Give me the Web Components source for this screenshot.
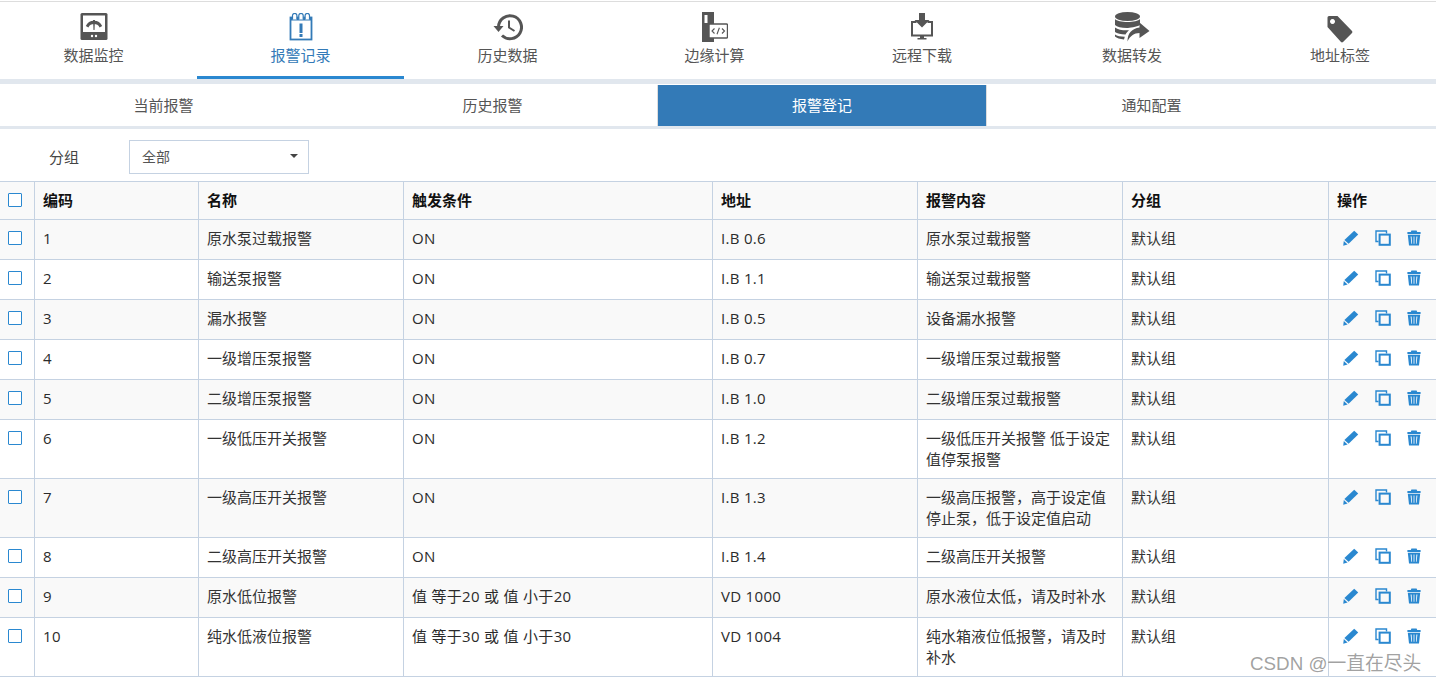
<!DOCTYPE html>
<html lang="zh">
<head>
<meta charset="utf-8">
<title>报警登记</title>
<style>
    html, body { margin: 0; padding: 0; background: #fff; }
    body {
        font-family: "Open Sans", "Noto Sans CJK SC", sans-serif;
        font-size: 15px;
        color: #333;
        height: 684px;
        overflow: hidden;
        position: relative;
    }
</style>
</head>
<body>
<top-nav>
    <nav-item label="数据监控" icon="gauge"></nav-item>
    <nav-item label="报警记录" icon="alarm" active></nav-item>
    <nav-item label="历史数据" icon="history"></nav-item>
    <nav-item label="边缘计算" icon="edge"></nav-item>
    <nav-item label="远程下载" icon="download"></nav-item>
    <nav-item label="数据转发" icon="forward"></nav-item>
    <nav-item label="地址标签" icon="tag"></nav-item>
</top-nav>
<sub-tabs>
    <sub-tab>当前报警</sub-tab>
    <sub-tab>历史报警</sub-tab>
    <sub-tab active>报警登记</sub-tab>
    <sub-tab>通知配置</sub-tab>
</sub-tabs>
<group-filter label="分组" value="全部"></group-filter>
<alarm-table></alarm-table>
<water-mark>CSDN @一直在尽头</water-mark>

<script>
const NAV_ICONS = {
    gauge: `<svg width="28" height="28" viewBox="0 0 28 28">
        <rect x="0.5" y="0" width="27" height="27" rx="1.5" fill="currentColor"/>
        <rect x="3" y="2.5" width="22" height="16.5" fill="#fff"/>
        <path d="M5.8 13 A9 9 0 0 1 22.2 13 L19.6 14.4 A6.4 6.4 0 0 0 8.4 14.4 Z" fill="currentColor"/>
        <path d="M13 7 L15 7 L14.5 17 L13.5 17 Z" fill="currentColor"/>
        <circle cx="12" cy="23" r="1.2" fill="#fff"/><circle cx="16" cy="23" r="1.2" fill="#fff"/>
    </svg>`,
    alarm: `<svg width="24" height="28" viewBox="0 0 24 28">
        <rect x="1.5" y="4.5" width="21" height="22" fill="none" stroke="currentColor" stroke-width="1.8"/>
        <rect x="1" y="4" width="22" height="3.5" fill="currentColor"/>
        <path d="M3.5 6.5 V2.6 a2 2 0 0 1 4.4 0 V6.5 M9.8 6.5 V2.6 a2 2 0 0 1 4.4 0 V6.5 M16.1 6.5 V2.6 a2 2 0 0 1 4.4 0 V6.5" fill="#fff" stroke="currentColor" stroke-width="1.2"/>
        <rect x="10.5" y="10.5" width="3" height="9.5" fill="currentColor"/>
        <rect x="10.5" y="21" width="3" height="3" fill="currentColor"/>
    </svg>`,
    history: `<svg width="30" height="28" viewBox="0 0 30 28">
        <path d="M5.5 14 A11.5 11.5 0 1 1 9 22.5" fill="none" stroke="currentColor" stroke-width="3"/>
        <path d="M0.5 13 L10.5 13 L5.5 19 Z" fill="currentColor"/>
        <path d="M16 7.5 V14.5 L21.5 18" fill="none" stroke="currentColor" stroke-width="2"/>
    </svg>`,
    edge: `<svg width="26" height="30" viewBox="0 0 26 30">
        <path d="M0 0 H12 V12 H7 V25 H12 V30 H0 Z" fill="currentColor"/>
        <rect x="2.5" y="3" width="3" height="8" fill="#fff"/>
        <rect x="7" y="12" width="18.5" height="14" rx="1" fill="#fff" stroke="currentColor" stroke-width="1.4"/>
        <path d="M12.5 16.5 L10 19 L12.5 21.5 M20 16.5 L22.5 19 L20 21.5 M17.4 15.8 L15 22.2" fill="none" stroke="currentColor" stroke-width="1.1"/>
    </svg>`,
    download: `<svg width="22" height="28" viewBox="0 0 22 28">
        <path d="M8 0 H14 V7 H18.5 L11 14.5 L3.5 7 H8 Z" fill="currentColor"/>
        <path d="M5.5 9 H1 V22.5 H21 V9 H16.5" fill="none" stroke="currentColor" stroke-width="2"/>
        <path d="M9 23 H13 V25 H15.5 V26.5 H6.5 V25 H9 Z" fill="currentColor"/>
    </svg>`,
    forward: `<svg width="35" height="30" viewBox="0 0 35 30">
        <ellipse cx="12.5" cy="4.5" rx="12.5" ry="4.5" fill="currentColor"/>
        <path d="M0 7 C3 11 22 11 25 7 V13 C22 15 14 16 12 16 C6 16 2 15 0 13 Z" fill="currentColor"/>
        <path d="M0 15.5 C3 18 9 18.5 14 18.2 C12.5 19.5 11.5 20.5 10.5 22.5 C6 22.3 2 21.5 0 20 Z" fill="currentColor"/>
        <path d="M0 22.5 C2 24 5.5 24.7 9.8 24.8 L9 27.5 C5 27 1.5 26 0 24.5 Z" fill="currentColor"/>
        <path d="M12.5 29.5 C12.5 21 17 16.5 24.5 15.5 V10.5 L34.5 19 L24.5 26 V21 C19 21 15 24 12.5 29.5 Z" fill="currentColor"/>
    </svg>`,
    tag: `<svg width="26" height="27" viewBox="0 0 26 27" style="margin-top:4px">
        <path fill-rule="evenodd" d="M2 0 H10.5 L25 15 a1.5 1.5 0 0 1 0 2 L16 26 a1.5 1.5 0 0 1 -2 0 L0.5 11 V1.5 A1.5 1.5 0 0 1 2 0 Z M5.5 3 a2.5 2.5 0 1 0 0.01 0 Z" fill="currentColor"/>
    </svg>`
};

class NavItem extends HTMLElement {
    constructor() {
        super();
        this.attachShadow({ mode: 'open' });
        const icon = this.getAttribute('icon');
        this.shadowRoot.innerHTML = `
            <style>
                :host {
                    display: flex;
                    flex-direction: column;
                    align-items: center;
                    box-sizing: border-box;
                    height: 77px;
                    padding-top: 9px;
                    color: #555;
                    border-bottom: 3px solid transparent;
                }
                :host([active]) {
                    color: #337ab7;
                    border-bottom-color: #2a88d0;
                }
                .icon {
                    height: 32px;
                    display: flex;
                    align-items: center;
                    justify-content: center;
                }
                svg { display: block; }
                .label { line-height: 21px; margin-top: 2px; }
            </style>
            <div class="icon">${NAV_ICONS[icon] || ''}</div>
            <div class="label">${this.getAttribute('label')}</div>
        `;
    }
}

class TopNav extends HTMLElement {
    constructor() {
        super();
        this.attachShadow({ mode: 'open' });
        this.shadowRoot.innerHTML = `
            <style>
                :host {
                    display: block;
                    margin-top: 1px;
                    border-top: 1px solid #ddd;
                    border-bottom: 5px solid #e1e7ee;
                    overflow: hidden;
                }
                .row {
                    display: grid;
                    grid-template-columns: 207px 207px 207px 207px 208px 212px 204px;
                    margin-left: -10px;
                }
            </style>
            <div class="row"><slot></slot></div>
        `;
    }
}

class SubTab extends HTMLElement {
    constructor() {
        super();
        this.attachShadow({ mode: 'open' });
        this.shadowRoot.innerHTML = `
            <style>
                :host {
                    display: block;
                    height: 41px;
                    margin-top: 1px;
                    line-height: 40px;
                    text-align: center;
                    color: #555;
                }
                :host([active]) {
                    background: #337ab7;
                    color: #fff;
                    margin-right: 1px;
                    box-shadow: -1px 0 0 #ddd, 1px 0 0 #ddd;
                }
            </style>
            <slot></slot>
        `;
    }
}

class SubTabs extends HTMLElement {
    constructor() {
        super();
        this.attachShadow({ mode: 'open' });
        this.shadowRoot.innerHTML = `
            <style>
                :host {
                    display: grid;
                    grid-template-columns: 327px 331px 329px 329px;
                    border-bottom: 3px solid #e1e7ee;
                    height: 42px;
                }
            </style>
            <slot></slot>
        `;
    }
}

class GroupFilter extends HTMLElement {
    constructor() {
        super();
        this.attachShadow({ mode: 'open' });
        this.shadowRoot.innerHTML = `
            <style>
                :host {
                    display: flex;
                    align-items: center;
                    height: 52px;
                    padding: 4px 0 0 49px;
                    box-sizing: border-box;
                }
                .label { width: 80px; line-height: 21px; color: #444; }
                .select {
                    box-sizing: border-box;
                    width: 180px;
                    height: 34px;
                    padding: 0 10px 2px 12px;
                    display: flex;
                    align-items: center;
                    justify-content: space-between;
                    border: 1px solid #c5d2e2;
                    font-size: 14px;
                    color: #555;
                }
                .caret {
                    width: 0; height: 0;
                    border-left: 4px solid transparent;
                    border-right: 4px solid transparent;
                    border-top: 4px solid #444;
                }
            </style>
            <div class="label">${this.getAttribute('label')}</div>
            <div class="select"><span>${this.getAttribute('value')}</span><i class="caret"></i></div>
        `;
    }
}

class CheckBox extends HTMLElement {
    constructor() {
        super();
        this.attachShadow({ mode: 'open' });
        this.shadowRoot.innerHTML = `
            <style>
                :host {
                    display: block;
                    box-sizing: border-box;
                    width: 14px;
                    height: 14px;
                    margin-top: 3px;
                    border: 1px solid #2a88d0;
                    border-radius: 1px;
                    background: #fff;
                }
            </style>
        `;
    }
}

class RowActions extends HTMLElement {
    constructor() {
        super();
        this.attachShadow({ mode: 'open' });
        this.shadowRoot.innerHTML = `
            <style>
                :host {
                    display: flex;
                    gap: 16px;
                    height: 23px;
                    padding-left: 6px;
                    padding-top: 2px;
                    box-sizing: border-box;
                    color: #2a88d0;
                }
                svg { display: block; flex: none; }
            </style>
            <svg width="16" height="16" viewBox="0 0 16 16" fill="currentColor">
                <path d="M11.2 0.8 L15.2 4.6 L5.6 13.8 L1.4 10 Z"/>
                <path d="M0.8 11 L4.6 14.6 L0.2 15.8 Z"/>
            </svg>
            <svg width="16" height="16" viewBox="0 0 16 16" fill="none" stroke="currentColor">
                <path d="M3.5 11.5 H1 V1 H11.5 V3.5" stroke-width="1.4"/>
                <rect x="4.6" y="4.6" width="10.2" height="10.2" stroke-width="2"/>
            </svg>
            <svg width="14" height="16" viewBox="0 0 14 16" fill="currentColor">
                <path d="M4.4 0.6 H9.6 L10.2 2 H13.6 V4 H0.4 V2 H3.8 Z"/>
                <path fill-rule="evenodd" d="M0.8 4.8 H13.2 L12 15.4 H2 Z M3.6 6.5 L4.4 13.8 H5.1 L4.6 6.5 Z M6.6 6.5 V13.8 H7.4 V6.5 Z M9.4 6.5 L8.9 13.8 H9.6 L10.4 6.5 Z"/>
            </svg>
        `;
    }
}

const ALARM_ROWS = [
    ['1', '原水泵过载报警', 'ON', 'I.B 0.6', '原水泵过载报警'],
    ['2', '输送泵报警', 'ON', 'I.B 1.1', '输送泵过载报警'],
    ['3', '漏水报警', 'ON', 'I.B 0.5', '设备漏水报警'],
    ['4', '一级增压泵报警', 'ON', 'I.B 0.7', '一级增压泵过载报警'],
    ['5', '二级增压泵报警', 'ON', 'I.B 1.0', '二级增压泵过载报警'],
    ['6', '一级低压开关报警', 'ON', 'I.B 1.2', '一级低压开关报警 低于设定值停泵报警'],
    ['7', '一级高压开关报警', 'ON', 'I.B 1.3', '一级高压报警，高于设定值停止泵，低于设定值启动'],
    ['8', '二级高压开关报警', 'ON', 'I.B 1.4', '二级高压开关报警'],
    ['9', '原水低位报警', '值 等于20 或 值 小于20', 'VD 1000', '原水液位太低，请及时补水'],
    ['10', '纯水低液位报警', '值 等于30 或 值 小于30', 'VD 1004', '纯水箱液位低报警，请及时补水']
];

class AlarmTable extends HTMLElement {
    constructor() {
        super();
        this.attachShadow({ mode: 'open' });
        const heads = ['编码', '名称', '触发条件', '地址', '报警内容', '分组', '操作'];
        const body = ALARM_ROWS.map(row => `
            <tr>
                <td class="check"><check-box></check-box></td>
                ${row.map(text => `<td class="${/[0-9A-Z]/.test(text) ? 'latin' : ''}">${text}</td>`).join('')}
                <td>默认组</td>
                <td class="ops"><row-actions></row-actions></td>
            </tr>`).join('');
        this.shadowRoot.innerHTML = `
            <style>
                :host { display: block; color: #333; }
                table {
                    width: 1436px;
                    table-layout: fixed;
                    border-collapse: separate;
                    border-spacing: 0;
                    border-top: 1px solid #c5d2e2;
                }
                th, td {
                    box-sizing: border-box;
                    padding: 8px;
                    line-height: 21px;
                    font-size: 15px;
                    text-align: left;
                    vertical-align: top;
                    border-right: 1px solid #c5d2e2;
                    border-bottom: 1px solid #c5d2e2;
                }
                th { height: 38px; font-weight: 700; color: #111; background: #f9f9f9; }
                td { height: 40px; }
                th:last-child, td:last-child { border-right: 0; }
                tbody tr:nth-child(odd) td { background: #f9f9f9; }
                .check { padding-right: 0; }
                .latin { letter-spacing: .3px; color: #2b2b2b; }
            </style>
            <table>
                <colgroup>
                    <col style="width:35px"><col style="width:164px"><col style="width:205px">
                    <col style="width:309px"><col style="width:205px"><col style="width:205px">
                    <col style="width:206px"><col style="width:107px">
                </colgroup>
                <thead>
                    <tr>
                        <th class="check"><check-box></check-box></th>
                        ${heads.map(text => `<th>${text}</th>`).join('')}
                    </tr>
                </thead>
                <tbody>${body}</tbody>
            </table>
        `;
    }
}

class WaterMark extends HTMLElement {
    constructor() {
        super();
        this.attachShadow({ mode: 'open' });
        this.shadowRoot.innerHTML = `
            <style>
                :host {
                    position: absolute;
                    left: 1250px;
                    top: 652px;
                    font-family: "Liberation Sans", "Noto Sans CJK SC", sans-serif;
                    font-size: 18.8px;
                    line-height: 24px;
                    color: rgba(120, 120, 120, 0.7);
                    white-space: nowrap;
                }
            </style>
            <slot></slot>
        `;
    }
}

customElements.define('check-box', CheckBox);
customElements.define('row-actions', RowActions);
customElements.define('nav-item', NavItem);
customElements.define('top-nav', TopNav);
customElements.define('sub-tab', SubTab);
customElements.define('sub-tabs', SubTabs);
customElements.define('group-filter', GroupFilter);
customElements.define('alarm-table', AlarmTable);
customElements.define('water-mark', WaterMark);
</script>
</body>
</html>
